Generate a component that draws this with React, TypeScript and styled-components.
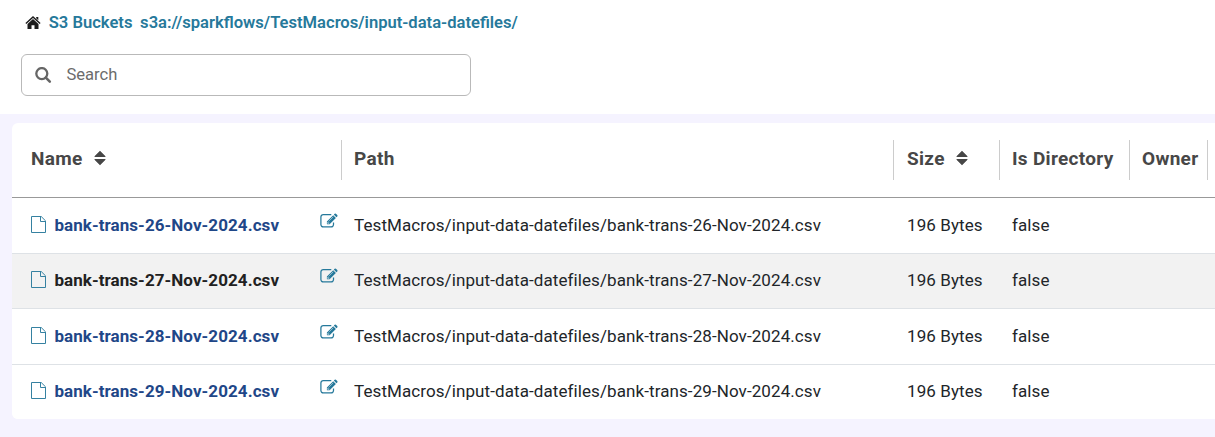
import React from "react";
import styled, { createGlobalStyle } from "styled-components";

const GlobalStyle = createGlobalStyle`
  * { box-sizing: border-box; }
  body {
    margin: 0;
    background: #f5f3ff;
    font-family: Roboto, "Liberation Sans", sans-serif;
    color: #212529;
    overflow: hidden;
  }
`;

const Page = styled.div`
  height: 437px;
  width: 100%;
  overflow: hidden;
`;

const TopBar = styled.header`
  height: 114px;
  padding: 11px 0 0 21px;
  background: #fff;
`;

const Breadcrumb = styled.nav`
  display: flex;
  align-items: center;
  height: 24px;
  padding-left: 4px;
  font-size: 16.58px;
  font-weight: 600;
  line-height: 24px;
  color: #26799b;
  white-space: pre;
`;

const Crumb = styled.span`
  margin-left: 7.7px;
`;

const SearchBox = styled.label`
  display: flex;
  align-items: center;
  width: 450px;
  height: 42px;
  margin-top: 19px;
  padding-left: 13.4px;
  border: 1px solid #b9b9b9;
  border-radius: 6px;
  color: #666;
`;

const SearchInput = styled.input`
  flex: 1;
  margin: 0 0 2px 14px;
  padding: 0;
  border: 0;
  outline: 0;
  background: transparent;
  font: 400 16.6px Roboto, sans-serif;
  &::placeholder { color: #6c6c6c; opacity: 1; }
`;

const Card = styled.section`
  margin: 9px 0 0 12px;
  height: 296px;
  background: #fff;
  border-radius: 6px 0 0 6px;
  overflow: hidden;
`;

const columns = "330px 552px 106px 130px 78px 1fr";

const HeaderRow = styled.div`
  display: grid;
  grid-template-columns: ${columns};
  align-items: center;
  height: 75px;
  border-bottom: 1px solid #999;
`;

const HeaderCell = styled.div<{ $inset: number }>`
  display: flex;
  align-items: center;
  height: 40px;
  margin-bottom: 1px;
  padding: 0 0 3px ${(p) => p.$inset}px;
  border-right: 1px solid #ccc;
  font-size: 19px;
  font-weight: 700;
  letter-spacing: 0.3px;
  color: #474747;
  white-space: nowrap;
`;

const Row = styled.div<{ $active?: boolean }>`
  display: grid;
  grid-template-columns: ${columns};
  height: 55.5px;
  border-bottom: 1px solid #dee2e6;
  background: ${(p) => (p.$active ? "#f2f2f2" : "#fff")};
  &:last-child { height: 54.5px; border-bottom: 0; }
`;

const Cell = styled.div<{ $inset: number }>`
  display: flex;
  align-items: center;
  padding: 0 0 0.8px ${(p) => p.$inset}px;
  font-size: 17px;
  line-height: 20px;
  letter-spacing: 0.09px;
  white-space: nowrap;
`;

const FileName = styled.a<{ $active?: boolean }>`
  margin-left: 7.4px;
  font-weight: 700;
  letter-spacing: 0.07px;
  color: ${(p) => (p.$active ? "#212121" : "#1f4788")};
`;

const EditButton = styled.span`
  display: flex;
  margin: 0 4px 8.2px auto;
`;

const SortGlyph = styled.svg`
  margin-left: 11.6px;
`;

const HomeIcon = () => (
  <svg width="16" height="14" viewBox="0 0 16 14" fill="#1c1c1c">
    <path d="M8 .1 15.6 7.1 14.7 8.1 8 2.1 1.3 8.1.4 7.1ZM11.2.9h2.1v3.3l-2.1-1.9Z" />
    <path d="M8 3.1 13.5 8.1V13H9.5V9.2H6.5V13H2.5V8.1Z" />
  </svg>
);

const SearchIcon = () => (
  <svg width="17" height="17" viewBox="0 0 17 17" fill="none" stroke="#666">
    <circle cx="6.8" cy="6.6" r="5.5" strokeWidth="2.3" />
    <path d="M10.8 10.6 14.8 14.6" strokeWidth="2.6" strokeLinecap="round" />
  </svg>
);

const FileIcon = () => (
  <svg width="16" height="18" viewBox="0 0 16 18" fill="none" stroke="#3581a1">
    <path d="M.5.5H10.2L14.5 4.8V16.5H.5ZM9.5.5V5.5H14.5" />
  </svg>
);

const EditIcon = () => (
  <svg width="18" height="16" viewBox="0 0 18 16" fill="none">
    <path
      d="M11.3 1.6H3.2A2.3 2.3 0 0 0 .9 3.9V11.6A2.3 2.3 0 0 0 3.2 13.9H11.2A2.3 2.3 0 0 0 13.5 11.6V9.6"
      stroke="#26799b"
      strokeWidth="1.25"
    />
    <path d="M13.2 2.2 15.9 4.9 9.6 11.2H6.9V8.5ZM13.8 1.6 14.7.7Q15.3.2 15.9.7L17.3 2.1Q17.8 2.7 17.3 3.4L16.4 4.3Z" fill="#26799b" />
    <path d="M8.2 8.8 7.7 9.3V10.4H8.8L9.3 9.9ZM9.2 7.8 13.2 3.8" stroke="#fff" strokeWidth=".5" />
  </svg>
);

const SortIcon = () => (
  <SortGlyph width="12" height="16" viewBox="0 0 12 16" fill="#474747">
    <path d="M6 .8 11.5 6.2Q11.8 7 11 7H1Q.2 7 .5 6.2ZM6 15.2 11.5 9.8Q11.8 9 11 9H1Q.2 9 .5 9.8Z" />
  </SortGlyph>
);

const files = [26, 27, 28, 29].map((day) => `bank-trans-${day}-Nov-2024.csv`);

export default function App() {
  return (
    <Page>
      <GlobalStyle />
      <TopBar>
        <Breadcrumb>
          <HomeIcon />
          <Crumb>S3 Buckets</Crumb>
          <Crumb>s3a://sparkflows/TestMacros/input-data-datefiles/</Crumb>
        </Breadcrumb>
        <SearchBox>
          <SearchIcon />
          <SearchInput placeholder="Search" />
        </SearchBox>
      </TopBar>
      <Card>
        <HeaderRow>
          <HeaderCell $inset={19}>Name<SortIcon /></HeaderCell>
          <HeaderCell $inset={12}>Path</HeaderCell>
          <HeaderCell $inset={13}>Size<SortIcon /></HeaderCell>
          <HeaderCell $inset={12}>Is Directory</HeaderCell>
          <HeaderCell $inset={12}>Owner</HeaderCell>
        </HeaderRow>
        {files.map((name, i) => (
          <Row key={name} $active={i === 1}>
            <Cell $inset={19}>
              <FileIcon />
              <FileName $active={i === 1}>{name}</FileName>
              <EditButton><EditIcon /></EditButton>
            </Cell>
            <Cell $inset={12}>TestMacros/input-data-datefiles/{name}</Cell>
            <Cell $inset={13}>196 Bytes</Cell>
            <Cell $inset={12}>false</Cell>
          </Row>
        ))}
      </Card>
    </Page>
  );
}
